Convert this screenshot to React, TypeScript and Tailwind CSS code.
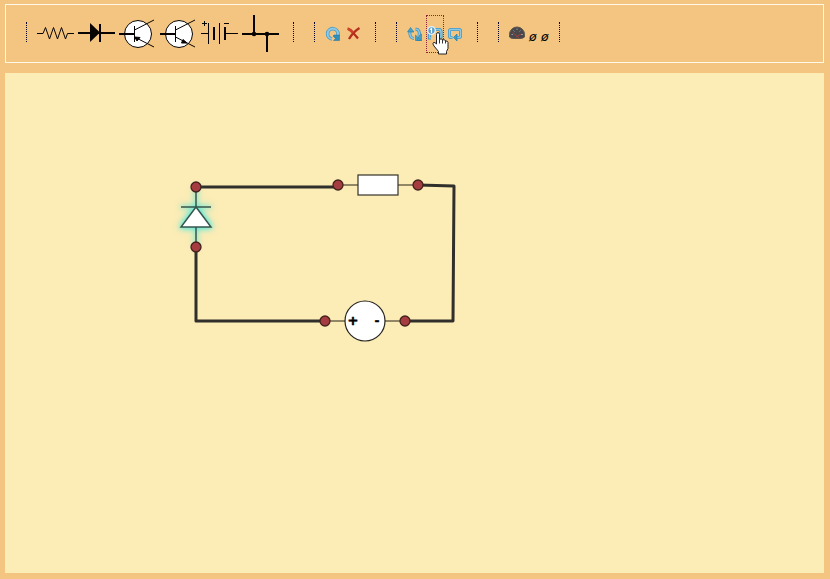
import type { ReactNode } from 'react';

function Glyph({ x, w = 37, children }: { x: number; w?: number; children: ReactNode }) {
  return (
    <svg className="block shrink-0 overflow-visible" width={w} height={20} viewBox={`${x} 22 ${w} 20`} fill="none" stroke="#080404">
      {children}
    </svg>
  );
}

function Group({ width, children }: { width: string; children: ReactNode }) {
  return (
    <div className={`flex h-5 shrink-0 gap-1 border-x border-dotted border-[#080430] pl-2.5 ${width}`}>
      {children}
    </div>
  );
}

function Transistor({ x, npn = false }: { x: number; npn?: boolean }) {
  return (
    <Glyph x={x}>
      <g transform={`translate(${x - 119} 0)`}>
        <circle cx="138" cy="34" r="13.5" fill="white" />
        <path d="M119 34H134.5" strokeWidth="2" />
        <path d="M134.5 26V42M134.5 30L154 20M134.5 37L154 47" />
        <path d={npn ? 'M146 43L142 39.500L140.500 43Z' : 'M134.500 37L140 37.500L137 41Z'} fill="#080404" />
      </g>
    </Glyph>
  );
}

function Toolbar() {
  return (
    <header className="flex h-[59px] gap-5 border border-[#fff9ea] pl-5 pt-[17px]">
      <Group width="w-[268px]">
        <Glyph x={37}>
          <path d="M37 33.500H43L45.500 27.500L49.500 39L53.500 27.500L57.500 39L61.500 27.500L65.500 39L67.500 33.500H74" />
        </Glyph>
        <Glyph x={78}>
          <path d="M78 33H115M100 24V42" strokeWidth="2" />
          <path d="M90 23L100 32.500L90 42Z" fill="#080404" stroke="none" />
        </Glyph>
        <Transistor x={119} />
        <Transistor x={160} npn />
        <Glyph x={201}>
          <path d="M202 23.500H207M204.500 21V26M224 23.500H229M201 33.500H208M208.500 23V44M219.500 23V44M225 33.500H238" />
          <path d="M214 27V40M225 27V40" strokeWidth="2" />
        </Glyph>
        <Glyph x={242}>
          <path d="M242 34H279M254 15V34M267 34V52" strokeWidth="2" />
          <circle cx="254" cy="34" r="2.3" fill="#080404" stroke="none" />
          <circle cx="267" cy="34" r="2.3" fill="#080404" stroke="none" />
        </Glyph>
      </Group>

      <Group width="w-[62px]">
        <Glyph x={325} w={16}>
          <path d="M332 39A5.200 5.200 0 1 1 338 34V36" stroke="#4b9cc4" strokeWidth="3.600" />
          <path d="M332 39A5.200 5.200 0 1 1 338 34V36" stroke="#8cc9e4" strokeWidth="2" />
          <path d="M334 35L339.500 35V40.500H333.500L335.500 38.500L333 36Z" fill="#2e8fbd" stroke="#21709d" strokeWidth=".5" />
        </Glyph>
        <Glyph x={345} w={16}>
          <path d="M348 29Q351 30 358 38.500M359.500 28Q353 32 349 39" stroke="#b5301c" strokeWidth="2.300" />
          <path d="M347.500 28.500Q351 29.500 353 32.500" stroke="#cf432b" strokeWidth="2.600" />
        </Glyph>
      </Group>

      <Group width="w-[82px]">
        <Glyph x={407} w={16}>
          <path d="M414 38.500Q409 38 410 31M415.500 29Q420.500 29.500 419 36" stroke="#3c92bf" strokeWidth="3" />
          <path d="M414 38.500Q409 38 410 31M415.500 29Q420.500 29.500 419 36" stroke="#8ccae4" strokeWidth="1.500" />
          <path d="M407.500 32L410.500 27.500L414 32ZM415.500 35L421.500 40.500H415.500ZM419 36L421.500 34V40.500H417Z" fill="#46a2cb" stroke="#237eaa" strokeWidth=".6" />
        </Glyph>
        <div className="relative">
          <Glyph x={427} w={16}>
            <path d="M431 38H429.500V31Q430 29.500 432 29.500H439Q441 29.500 441 32V37H437" stroke="#3c92bf" strokeWidth="3.200" />
            <path d="M431 38H429.500V31Q430 29.500 432 29.500H439Q441 29.500 441 32V37H437" stroke="#8bcbe5" strokeWidth="1.500" />
            <circle cx="431.500" cy="30.500" r="3.800" fill="#5d9fc6" stroke="#e6f2f5" strokeWidth="1.300" />
            <path d="M430 29.500L431.500 28.500V33" stroke="white" strokeWidth="1.200" />
          </Glyph>
          <div className="absolute -left-px -top-[7px] h-[38px] w-[18px] border border-dotted border-[#90223f]" />
          <svg className="absolute left-[5px] top-[10px] z-10 overflow-visible" width="18" height="23" viewBox="432 32 18 23">
            <path d="M436.500 34.500Q436.500 32.500 438 32.500Q439.500 32.500 439.500 34.500V39.500Q441 38.200 442.500 39.500V40Q444 39 445.500 40.500V41Q447.500 40.500 448 42.500V48.500L446.500 51.500V54H438.500V51.500L434 46Q432 43.500 433.500 42.500Q435 42 436.500 44Z" fill="white" stroke="#222" />
            <path d="M439.500 39V43.500M442.500 40V43.500M445.500 41V43.500" stroke="#333" strokeWidth="1" />
          </svg>
        </div>
        <Glyph x={447} w={16}>
          <path d="M452.500 37.500H450.500Q449.500 37.500 449.500 36V31Q449.500 29.500 451 29.500H459Q460.500 29.500 460.500 31V36Q460.500 37.500 459 37.500H456" stroke="#4696c0" strokeWidth="3" />
          <path d="M452.500 37.500H450.500Q449.500 37.500 449.500 36V31Q449.500 29.500 451 29.500H459Q460.500 29.500 460.500 31V36Q460.500 37.500 459 37.500H456" stroke="#8ccbe5" strokeWidth="1.500" />
          <path d="M457 34V41L453.500 37.500Z" fill="#3c9dc8" stroke="#237eaa" strokeWidth=".7" />
        </Glyph>
      </Group>

      <Group width="w-[62px]">
        <Glyph x={509} w={16}>
          <path d="M509.500 37V34.500A7.500 7.500 0 0 1 524.500 34.500V37Q523 38.500 520 38.500H514Q510.500 38.500 509.500 37Z" fill="#48484c" stroke="#5d554c" />
          <path d="M511.500 34.500H513M513.500 30.500L514.500 31.500M517 28.500V30M520.500 30.500L519.500 31.500M521 34.500H523" stroke="#8f969c" />
          <path d="M512.500 32.500L519 38M516 37L521 34" stroke="#99423c" />
        </Glyph>
        <span className="w-2 pt-[5px] font-['DejaVu_Sans',sans-serif] text-[12.5px] italic leading-5">ø</span>
        <span className="w-2 pt-[5px] font-['DejaVu_Sans',sans-serif] text-[12.5px] italic leading-5">ø</span>
      </Group>
    </header>
  );
}

const terminals = [
  [196, 187], [196, 247], [338, 185], [418, 185], [325, 321], [405, 321],
];

function Circuit() {
  return (
    <svg className="block" width="819" height="500" viewBox="5 73 819 500" fill="none">
      <g stroke="#302f2b" strokeWidth="3" strokeLinejoin="round">
        <path d="M196 187H335L338 185" />
        <path d="M418 185L454 186L453 321H405" />
        <path d="M196 247V321H325" />
      </g>
      <g stroke="#6d654c" strokeWidth="1.500">
        <path d="M338 185H358M398 185H418M325 321H345M385 321H405" />
      </g>
      <g className="[filter:drop-shadow(0_0_3px_#5ee6d4)_drop-shadow(0_0_2px_#7ee8d4)]" stroke="#36564c" strokeWidth="1.500">
        <path d="M196 187V207M196 227V247M181 207H211" />
        <path d="M196 207L211 227H181Z" fill="white" />
      </g>
      <rect x="358" y="175" width="40" height="20" fill="white" stroke="#343129" strokeWidth="1.200" />
      <circle cx="365" cy="321" r="20" fill="white" stroke="#24231f" strokeWidth="1.200" />
      <text x="347.500" y="325" fill="black" stroke="black" strokeWidth=".6" className="font-['DejaVu_Sans',sans-serif] text-[13px] font-bold">+</text>
      <text x="374.500" y="325" fill="black" stroke="black" strokeWidth=".3" className="font-['DejaVu_Sans',sans-serif] text-[12px] font-bold">-</text>
      {terminals.map(([x, y]) => (
        <circle key={`${x}-${y}`} cx={x} cy={y} r="5" fill="#a43c40" stroke="#43221d" strokeWidth="1.300" />
      ))}
    </svg>
  );
}

export default function App() {
  return (
    <div className="flex h-[579px] w-[830px] flex-col gap-2.5 overflow-hidden bg-[#f4c581] pb-1.5 pl-[5px] pr-1.5 pt-1">
      <Toolbar />
      <main className="h-[500px] bg-[#fcecb6]">
        <Circuit />
      </main>
    </div>
  );
}
